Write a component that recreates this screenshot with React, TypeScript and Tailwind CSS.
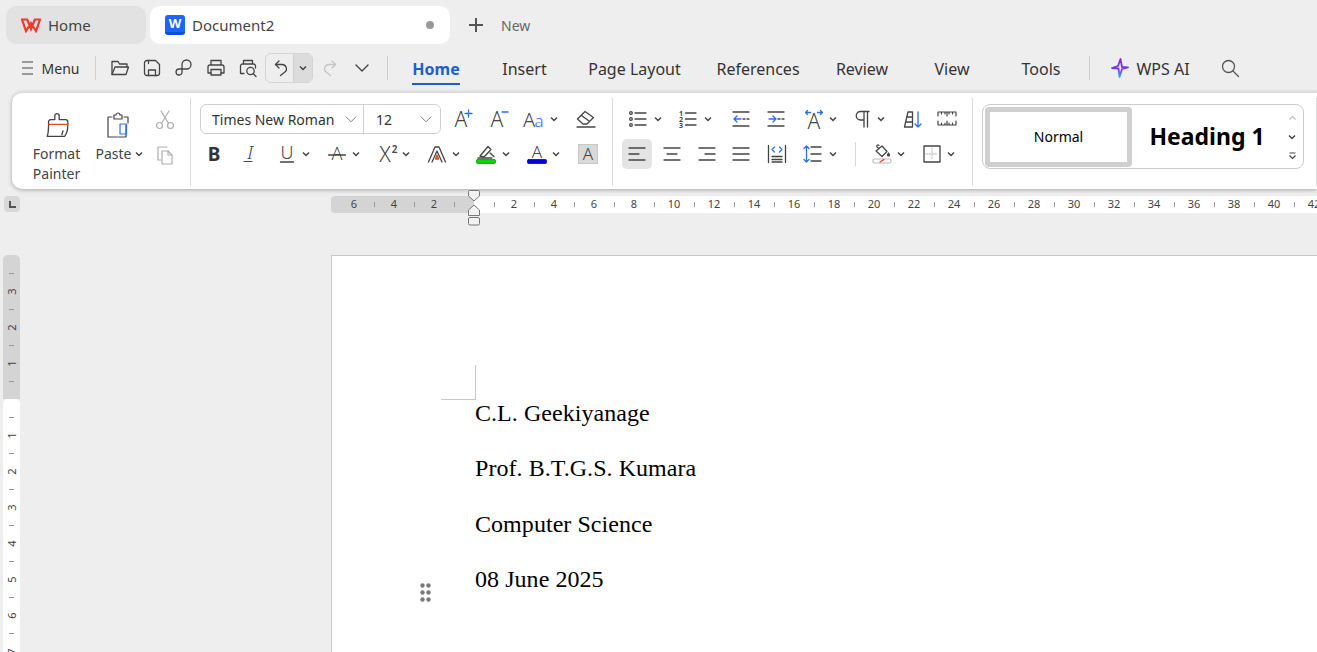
import type { ReactNode } from 'react';

const BLUE = '#2f6fed';
const INK = '#444';
const TXT = { fontFamily: '"Noto Sans", sans-serif' };

function Ic({ children, w = 20, h = 20, box = '0 0 20 20', color = INK, sw = 1.3 }: { children: ReactNode; w?: number; h?: number; box?: string; color?: string; sw?: number }) {
  return (
    <svg width={w} height={h} viewBox={box} fill="none" stroke={color} strokeWidth={sw} strokeLinecap="round" strokeLinejoin="round" className="shrink-0 overflow-visible">
      {children}
    </svg>
  );
}

function Chev() {
  return (
    <svg width="8" height="8" viewBox="0 0 8 8" fill="none" stroke="#444" strokeWidth="1.5" className="shrink-0">
      <path d="M1 2.5 4 5.5 7 2.5" />
    </svg>
  );
}

function Letter({ x = 10, y = 16, size = 21, fill = INK, weight = 300, style = 'normal', children }: { x?: number; y?: number; size?: number; fill?: string; weight?: number; style?: string; children: string }) {
  return (
    <text x={x} y={y} textAnchor="middle" fontSize={size} fontWeight={weight} fontStyle={style} fill={fill} stroke="none" fontFamily='"Noto Sans", sans-serif'>
      {children}
    </text>
  );
}

/* ---------- quick access icons ---------- */
const Open = () => <Ic><path d="M2 16.5V3.5h6L9.5 6H17v3" /><path d="M2 16.5h14L18.5 9H5z" /></Ic>;
const Save = () => <Ic><path d="M5 2.5h8.5L17.5 6.5V15a2.5 2.5 0 0 1-2.5 2.5H5A2.5 2.5 0 0 1 2.5 15V5A2.5 2.5 0 0 1 5 2.5z" /><path d="M6.5 17.5v-5.5h7v5.5M6.5 2.5v3" /></Ic>;
const Loop = () => <Ic><path d="M8 11h4.5a4.5 4.5 0 0 0 0-9A4.5 4.5 0 0 0 8 6.5V14.5a3 3 0 1 1-3-3.5h3" /></Ic>;
const Print = () => <Ic><path d="M5 7V2.5h10V7M5 15H2V9a2 2 0 0 1 2-2h12a2 2 0 0 1 2 2v6h-3" /><rect x="5" y="11.5" width="10" height="5.5" /></Ic>;
const Preview = () => <Ic><path d="M5.5 6V2.5h9V6M6 15.5H2.5V8a2 2 0 0 1 2-2h11a2 2 0 0 1 2 2v2" /><circle cx="12.5" cy="13" r="3.7" /><path d="M15.3 15.8 18 18.5" /></Ic>;
const Undo = () => <Ic><path d="M8 3 4.5 6.5 8 10" /><path d="M4.5 6.5H11a4.3 4.3 0 0 1 2.3 8L9.5 17.5" /></Ic>;
const Redo = () => <Ic color="#c4c4c4"><path d="M12 3l3.5 3.5L12 10" /><path d="M15.5 6.5H9a4.3 4.3 0 0 0-2.3 8l3.8 3" /></Ic>;

/* ---------- clipboard group ---------- */
const Brush = () => (
  <Ic w={26} h={26} box="0 0 24 24" sw={1.2}>
    <path d="M10 7V3.5a2 2 0 0 1 4 0V7h6a2 2 0 0 1 2 2v3c0 5-1 8-3 10.5H3c1-3 1.2-6 1.2-10.5V9a2 2 0 0 1 2-2z" />
    <path d="M4.5 11.5h17" stroke="#d9501e" />
    <path d="M17.5 17.5 16.5 21" />
  </Ic>
);
const Paste = () => (
  <Ic w={26} h={26} box="0 0 26 26" sw={1.2}>
    <path d="M7 5H3v20h9M19 5h4v6" />
    <path d="M9 5V3h2a2 2 0 0 1 4 0h2v4H9z" />
    <path d="M21 13v12h-8" />
    <rect x="15" y="12" width="6.5" height="10" stroke={BLUE} />
  </Ic>
);
const Scissors = () => (
  <Ic color="#adadad" sw={1.2}>
    <circle cx="4.5" cy="15.5" r="3" /><circle cx="15.5" cy="15.5" r="3" />
    <path d="M6.5 13.2 14 1M13.5 13.2 6 1" />
  </Ic>
);
const Copy = () => (
  <Ic color="#adadad" sw={1.2}>
    <path d="M12 2H3v13h3" /><path d="M7 6h6l4 4v9H7z" /><path d="M13 6v4h4" />
  </Ic>
);

/* ---------- font group ---------- */
const Grow = () => <Ic><Letter x={8} y={17.5}>A</Letter><path d="M15.5 1v7M12 4.5h7" stroke={BLUE} /></Ic>;
const Shrink = () => <Ic><Letter x={8} y={17.5}>A</Letter><path d="M13 3h6" stroke={BLUE} /></Ic>;
const Case = () => <Ic><Letter x={6} y={17.5} size={20}>A</Letter><Letter x={16} y={17.5} size={17} fill={BLUE}>a</Letter></Ic>;
const Eraser = () => <Ic><path d="m1.5 10 7.5-7.5 8.5 6-6.5 6.5H7z" /><path d="m5.5 6.5 7.5 5.5" /><path d="M1 18h18" /></Ic>;
const Bold = () => <Ic><Letter size={19} weight={700} y={17} fill="#333">B</Letter></Ic>;
const Italic = () => <Ic sw={1.1}><Letter size={19} style="italic" y={15}>I</Letter><path d="M4 17.5h8" /></Ic>;
const Under = () => <Ic><Letter size={18} y={15}>U</Letter><path d="M3.5 18h13" /></Ic>;
const Strike = () => <Ic><Letter size={18} y={16}>A</Letter><path d="M1.5 11h17" /></Ic>;
const Sup = () => <Ic><Letter x={8} y={18} size={21}>X</Letter><Letter x={17.5} y={9} size={10} weight={600}>2</Letter></Ic>;
const Effect = () => <Ic><path d="M1.5 18 8 3h4l6.5 15M5 18l5-11 5 11" /><path d="M8.5 15h3L10 11z" fill="#d9501e" stroke="#d9501e" /></Ic>;
const Highlight = () => (
  <Ic><path d="M4 12 12 2.5l3 3L8 13z" /><path d="M14 9l4 3.5M2 14h14" /><rect x="0.5" y="15.5" width="19" height="4" rx="1" fill="#00d800" stroke="#00a000" strokeWidth="0.8" /></Ic>
);
const FontColor = () => (
  <Ic><Letter size={17} y={14}>A</Letter><rect x="0.5" y="15.5" width="19" height="4" rx="1" fill="#0000e0" stroke="#0000e0" strokeWidth="0.8" /></Ic>
);
const Shaded = () => <div className="w-[20px] h-[20px] bg-[#d9d9d9] border border-[#c8c8c8] flex items-center justify-center"><Ic w={18} h={18}><Letter size={19} y={17}>A</Letter></Ic></div>;

/* ---------- paragraph group ---------- */
const Bullets = () => <Ic><circle cx="3" cy="4" r="1.3" /><circle cx="3" cy="10" r="1.3" /><circle cx="3" cy="16" r="1.3" /><path d="M7 4h11M7 10h11M7 16h11" /></Ic>;
const Numbers = () => <Ic><Letter x={3} y={6.5} size={7} weight={700}>1</Letter><Letter x={3} y={12.5} size={7} weight={700}>2</Letter><Letter x={3} y={19} size={7} weight={700}>3</Letter><path d="M7.5 4h10.5M7.5 10h10.5M7.5 16h10.5" /></Ic>;
const Outdent = () => <Ic><path d="M2 3h16M2 17h16M12 10h2M16 10h2" /><path d="M10 10H3M6 7l-3 3 3 3" stroke={BLUE} /></Ic>;
const Indent = () => <Ic><path d="M2 3h16M2 17h16M12 10h2M16 10h2" /><path d="M3 10h7M7 7l3 3-3 3" stroke={BLUE} /></Ic>;
const Direction = () => <Ic><Letter y={20} size={21}>A</Letter><path d="M1.5 3.5h5M3.5 1.5l-2 2 2 2M13.5 3.5h5M16.5 1.5l2 2-2 2" stroke={BLUE} /></Ic>;
const Pilcrow = () => <Ic><path d="M12 2.5H8.5a4 4 0 0 0 0 8.5H12M12 2.5V18M15.5 2.5V18M12 2.5h5" /></Ic>;
const Sort = () => <Ic><path d="M1.5 18 5 3h4.5v15zM2.5 13H9.5M3.5 8H9.5" /><path d="M15 3v15M12 15l3 3 3-3" stroke={BLUE} /></Ic>;
const RulerIc = () => <Ic sw={1.2}><path d="M1 3h18M1 16h18M1 3v4M19 3v4M1 16v-4M19 16v-4M4.5 3v2M8 3v2M12 3v2M15.5 3v2M4.5 16v-2M8 16v-2M12 16v-2M15.5 16v-2M10 3v4M10 16v-4" /></Ic>;
const AlignIc = ({ d }: { d: string }) => <Ic><path d={d} /></Ic>;
const Distribute = () => <Ic><path d="M1.5 1.5v17M18.5 1.5v17M5 12.5h10M5 15.5h10M5 18h10" /><path d="M7.5 3 5 5.5 7.5 8M12.5 3 15 5.5 12.5 8" stroke={BLUE} /></Ic>;
const Spacing = () => <Ic><path d="M8 3h10M8 10h10M8 17h10" /><path d="M3.5 2v16M1 4.5l2.5-2.5L6 4.5M1 15.5 3.5 18 6 15.5" stroke={BLUE} /></Ic>;
const Bucket = () => (
  <Ic sw={1.2}>
    <path d="m4 7 6-5 5 5.5-5 5z" /><path d="M7 4.5 5 3a1.2 1.2 0 0 1 2-1.5" /><path d="M16.5 9c.8 1 1 1.5 1 2a1 1 0 0 1-2 0c0-.5.2-1 1-2z" fill="#444" />
    <rect x="1" y="15" width="18" height="4" rx="1.5" stroke="#bbb" /><path d="m8 18 4-2.5" stroke="#e0342c" />
  </Ic>
);
const Borders = () => <Ic sw={1.3}><rect x="2" y="2" width="16" height="16" /><path d="M10 4v12M4 10h12" stroke="#ccc" strokeDasharray="1.5 1.5" /></Ic>;

function Dd({ children, gap = 'gap-[5px]' }: { children: ReactNode; gap?: string }) {
  return <div className={`flex items-center ${gap}`}>{children}<Chev /></div>;
}

function Sep() {
  return <div className="w-px h-[88px] bg-[#dcdcdc] shrink-0 mt-[5px]" />;
}

function VSep() {
  return <div className="w-px h-[24px] bg-[#cfcfcf] shrink-0" />;
}

/* ---------- rulers ---------- */
function HSlot({ n }: { n?: number }) {
  return (
    <div className="w-[20px] shrink-0 flex items-center justify-center text-[11px] text-[#444]">
      {n !== undefined ? n : <div className="w-px h-[5px] bg-[#999]" />}
    </div>
  );
}

function VSlot({ n }: { n?: number }) {
  return (
    <div className="h-[18px] shrink-0 flex items-center justify-center text-[11px] text-[#444]">
      {n !== undefined ? <span className="-rotate-90 leading-none">{n}</span> : <div className="h-px w-[5px] bg-[#999]" />}
    </div>
  );
}

const RIGHT_NUMS = [2, 4, 6, 8, 10, 12, 14, 16, 18, 20, 22, 24, 26, 28, 30, 32, 34, 36, 38, 40, 42];
const DOWN_NUMS = [1, 2, 3, 4, 5, 6, 7];

const TABS = [
  { label: 'Insert', cls: 'ml-[43px] w-[43px]' },
  { label: 'Page Layout', cls: 'ml-[42px] w-[93px]' },
  { label: 'References', cls: 'ml-[36px] w-[82px]' },
  { label: 'Review', cls: 'ml-[37px] w-[52px]' },
  { label: 'View', cls: 'ml-[46px] w-[36px]' },
  { label: 'Tools', cls: 'ml-[52px] w-[38px]' },
];

export default function App() {
  return (
    <div className="h-[652px] w-[1317px] overflow-hidden bg-[#eeeeee] text-[#333]" style={TXT}>
      {/* Title tabs */}
      <div className="flex items-center h-[44px] pt-[6px] pl-[6px]">
        <div className="w-[140px] h-[38px] rounded-[10px] bg-[#e2e2e2] flex items-center pl-[15px]">
          <svg width="20" height="16" viewBox="0 0 20 16" fill="none" stroke="#f0392b" strokeWidth="2.2" strokeLinejoin="miter" className="shrink-0">
            <path d="M1 2.5h5.2l3.8 9.5 3.8-9.5H19L15 14l-5-8-5 8z" />
          </svg>
          <span className="ml-[7px] text-[15px] text-[#444]">Home</span>
        </div>
        <div className="ml-[4px] w-[300px] h-[38px] rounded-[10px] bg-white flex items-center pl-[15px]">
          <div className="w-[20px] h-[20px] rounded-[3px] bg-[#1a66ff] flex items-center justify-center text-white text-[13px] font-bold leading-none border-b-[3px] border-[#0d4fd6]">W</div>
          <span className="ml-[7px] text-[15px] text-[#444] w-[234px]">Document2</span>
          <div className="w-[8px] h-[8px] rounded-full bg-[#999]" />
        </div>
        <svg width="16" height="16" viewBox="0 0 16 16" stroke="#555" strokeWidth="2" className="ml-[18px] shrink-0"><path d="M8 1v14M1 8h14" /></svg>
        <span className="ml-[17px] text-[14px] text-[#666]">New</span>
      </div>

      {/* Quick access + menu tabs */}
      <div className="flex items-center h-[48px] pl-[22px] text-[16px]">
        <svg width="11" height="16" viewBox="0 0 11 16" stroke="#444" strokeWidth="1.2" className="shrink-0"><path d="M0 2h11M0 8h11M0 14h11" /></svg>
        <span className="ml-[9px] w-[37px] text-[14px] whitespace-nowrap flex justify-center">Menu</span>
        <div className="ml-[16px]"><VSep /></div>
        <div className="ml-[14px] flex items-center gap-[12px]">
          <Open /><Save /><Loop /><Print /><Preview />
        </div>
        <div className="ml-[7px] w-[48px] h-[30px] rounded-[6px] border border-[#d4d4d4] flex overflow-hidden shrink-0">
          <div className="w-[27px] flex items-center justify-center pl-[3px]"><Undo /></div>
          <div className="flex-1 bg-[#dcdcdc] border-l border-[#d0d0d0] flex items-center justify-center"><Chev /></div>
        </div>
        <div className="ml-[7px]"><Redo /></div>
        <div className="ml-[12px]">
          <Ic sw={1.4}><path d="m4 7 6 6 6-6" /></Ic>
        </div>
        <div className="ml-[15px]"><VSep /></div>
        <div className="ml-[24px] w-[48px] self-start mt-[13px] flex flex-col items-center">
          <span className="leading-[24px] font-bold text-[#1b5fcf] whitespace-nowrap">Home</span>
          <div className="h-[2px] w-full bg-[#1b5fcf] mt-[2px]" />
        </div>
        {TABS.map((t) => (
          <span key={t.label} className={`${t.cls} mt-[2px] flex justify-center whitespace-nowrap`}>{t.label}</span>
        ))}
        <div className="ml-[29px]"><VSep /></div>
        <svg width="18" height="20" viewBox="0 0 18 20" fill="none" strokeWidth="1.8" strokeLinejoin="round" className="ml-[21px] shrink-0">
          <defs>
            <linearGradient id="wpsai" x1="0" y1="0" x2="0" y2="1">
              <stop offset="0" stopColor="#8a2be2" />
              <stop offset="0.6" stopColor="#6a3cf0" />
              <stop offset="1" stopColor="#35a8f0" />
            </linearGradient>
          </defs>
          <path d="M9.5 1 7 8 1 10l6.5.5L8.5 19 11 11l6-1.5-6-.5z" stroke="url(#wpsai)" />
        </svg>
        <span className="ml-[6px] w-[56px] mt-[2px] flex justify-center whitespace-nowrap">WPS AI</span>
        <div className="ml-[29px]">
          <Ic color="#555" sw={1.3}><circle cx="8.5" cy="8.5" r="6" /><path d="m13 13 5.5 5.5" /></Ic>
        </div>
      </div>

      {/* Ribbon */}
      <div className="ml-[12px] h-[97px] bg-white rounded-l-[10px] border-t border-[#dcdcdc] shadow-[0_1px_4px_rgba(0,0,0,0.3)] flex items-start">
        <div className="w-[178px] h-full flex shrink-0 pl-[21px] pt-[19px]">
          <div className="w-[47px] flex flex-col items-center text-[14px] leading-[20px] text-[#444] whitespace-nowrap">
            <div className="mb-[6px] h-[26px]"><Brush /></div>
            <span>Format</span>
            <span>Painter</span>
          </div>
          <div className="ml-[17px] w-[44px] flex flex-col items-center text-[14px] leading-[20px] text-[#444]">
            <div className="mb-[6px] h-[26px] -ml-[2px]"><Paste /></div>
            <div className="flex items-center gap-[3px]"><span>Paste</span><Chev /></div>
          </div>
          <div className="ml-[14px] -mt-[7px] flex flex-col">
            <div className="h-[30px] flex items-center"><Scissors /></div>
            <div className="h-[30px] mt-[5px] flex items-center"><Copy /></div>
          </div>
        </div>
        <Sep />

        {/* Font */}
        <div className="w-[421px] shrink-0 pl-[9px] pt-[11px] flex flex-col gap-[5px]">
          <div className="h-[30px] flex items-center">
            <div className="w-[241px] h-[30px] rounded-[6px] border border-[#d0d0d0] flex items-center text-[14px] text-[#333] shrink-0">
              <div className="w-[163px] h-full border-r border-[#d0d0d0] flex items-center justify-between pl-[11px] pr-[5px]">
                <span className="whitespace-nowrap">Times New Roman</span>
                <Ic w={14} h={14} color="#777"><path d="m3 7 7 7 7-7" /></Ic>
              </div>
              <div className="flex-1 h-full flex items-center justify-between pl-[12px] pr-[7px]">
                <span>12</span>
                <Ic w={14} h={14} color="#777"><path d="m3 7 7 7 7-7" /></Ic>
              </div>
            </div>
            <div className="ml-[12px]"><Grow /></div>
            <div className="ml-[16px]"><Shrink /></div>
            <div className="ml-[14px]"><Dd gap="gap-[7px]"><Case /></Dd></div>
            <div className="ml-[18px]"><Eraser /></div>
          </div>
          <div className="h-[30px] flex items-center gap-[17px] pl-[4px]">
            <Bold />
            <div className="-ml-[1px]"><Italic /></div>
            <Dd><Under /></Dd>
            <Dd><Strike /></Dd>
            <Dd><Sup /></Dd>
            <Dd><Effect /></Dd>
            <div className="-ml-[1px]"><Dd gap="gap-[6px]"><Highlight /></Dd></div>
            <Dd><FontColor /></Dd>
            <div className="ml-[1px]"><Shaded /></div>
          </div>
        </div>
        <Sep />

        {/* Paragraph */}
        <div className="w-[359px] shrink-0 pl-[9px] pt-[11px] flex flex-col gap-[5px]">
          <div className="h-[30px] flex items-center pl-[6px]">
            <Dd gap="gap-[6px]"><Bullets /></Dd>
            <div className="ml-[16px]"><Dd gap="gap-[6px]"><Numbers /></Dd></div>
            <div className="ml-[19px]"><Outdent /></div>
            <div className="ml-[15px]"><Indent /></div>
            <div className="ml-[18px]"><Dd><Direction /></Dd></div>
            <div className="ml-[15px]"><Dd><Pilcrow /></Dd></div>
            <div className="ml-[18px]"><Sort /></div>
            <div className="ml-[14px]"><RulerIc /></div>
          </div>
          <div className="h-[30px] flex items-center">
            <div className="w-[30px] h-[30px] rounded-[5px] bg-[#e4e4e4] flex items-center justify-center">
              <AlignIc d="M2 4h16M2 10h10M2 16h16" />
            </div>
            <div className="ml-[10px]"><AlignIc d="M2 4h16M5 10h10M2 16h16" /></div>
            <div className="ml-[15px]"><AlignIc d="M2 4h16M8 10h10M2 16h16" /></div>
            <div className="ml-[14px]"><AlignIc d="M2 4h16M2 10h16M2 16h16" /></div>
            <div className="ml-[16px]"><Distribute /></div>
            <div className="ml-[16px]"><Dd gap="gap-[6px]"><Spacing /></Dd></div>
            <div className="ml-[18px] w-px h-[24px] bg-[#d8d8d8]" />
            <div className="ml-[16px]"><Dd><Bucket /></Dd></div>
            <div className="ml-[17px]"><Dd><Borders /></Dd></div>
          </div>
        </div>
        <Sep />

        {/* Styles gallery */}
        <div className="ml-[9px] mt-[11px] w-[322px] h-[65px] rounded-[8px] border border-[#cccccc] flex items-center pl-[2px] shrink-0">
          <div className="w-[147px] h-[60px] rounded-[4px] border-[5px] border-[#cfcfcf] flex items-center justify-center text-[14px] text-black shrink-0">Normal</div>
          <div className="w-[150px] flex justify-center text-[23px] font-bold text-black whitespace-nowrap">Heading 1</div>
          <div className="w-[20px] flex flex-col items-center gap-[11px]">
            <svg width="9" height="8" viewBox="0 0 8 8" fill="none" stroke="#c4c4c4" strokeWidth="1.4"><path d="M1 5.5 4 2.5 7 5.5" /></svg>
            <Chev />
            <svg width="9" height="8" viewBox="0 0 8 8" fill="none" stroke="#444" strokeWidth="1.2"><path d="M1 1h6M1 3.5 4 6.5 7 3.5" /></svg>
          </div>
        </div>
        <div className="ml-[12px]"><Sep /></div>
      </div>

      {/* Horizontal ruler */}
      <div className="mt-[7px] h-[17px] flex pl-[4px]">
        <div className="w-[16px] h-[16px] rounded-[4px] bg-[#d8d8d8] flex items-center justify-center shrink-0">
          <div className="w-[7px] h-[7px] border-l-2 border-b-2 border-[#555]" />
        </div>
        <div className="relative ml-[311px] flex-1 flex min-w-0">
          <div className="w-[143px] shrink-0 bg-[#d4d4d4] rounded-l-[4px] flex items-center pl-[13px]">
            {[6, 4, 2].map((n) => (
              <div key={n} className="flex">
                <HSlot n={n} />
                <HSlot />
              </div>
            ))}
          </div>
          <div className="flex-1 bg-white flex items-center pl-[10px] overflow-hidden min-w-0">
            {RIGHT_NUMS.map((n) => (
              <div key={n} className="flex shrink-0">
                <HSlot />
                <HSlot n={n} />
              </div>
            ))}
          </div>
          {/* indent markers */}
          <svg width="14" height="36" viewBox="0 0 14 36" fill="#f2f2f2" stroke="#777" strokeWidth="1" className="absolute left-[136px] -top-[6px]">
            <path d="M1.5 1.5a1 1 0 0 1 1-1h9a1 1 0 0 1 1 1V6L7 11 1.5 6z" />
            <path d="M7 15l5.5 5v5.5h-11V20z" />
            <rect x="1.5" y="27.5" width="11" height="7.5" rx="1.5" />
          </svg>
        </div>
      </div>

      {/* Body */}
      <div className="mt-[42px] h-[397px] flex pl-[3px]">
        <div className="w-[17px] shrink-0 flex flex-col overflow-hidden">
          <div className="h-[144px] shrink-0 bg-[#d4d4d4] rounded-t-[5px] pt-[9px]">
            {[3, 2, 1].map((n) => (
              <div key={n}>
                <VSlot />
                <VSlot n={n} />
              </div>
            ))}
            <VSlot />
          </div>
          <div className="flex-1 bg-white rounded-t-[5px] pt-[9px]">
            {DOWN_NUMS.map((n) => (
              <div key={n}>
                <VSlot />
                <VSlot n={n} />
              </div>
            ))}
          </div>
        </div>
        <div className="relative ml-[311px] flex-1 bg-white border-t border-l border-[#c8c8c8] pt-[109px] min-w-0">
          <div className="ml-[109px] w-[35px] h-[35px] border-r border-b border-[#c8c8c8]" />
          <div className="ml-[143px] -mt-[0.3px] flex flex-col gap-[28.5px] text-[24px] leading-[27px] tracking-[0.05px] text-black" style={{ fontFamily: '"Liberation Serif", serif' }}>
            <p>C.L. Geekiyanage</p>
            <p>Prof. B.T.G.S. Kumara</p>
            <p>Computer Science</p>
            <p>08 June 2025</p>
          </div>
          <svg width="11" height="19" viewBox="0 0 11 19" fill="#7a7a7a" className="absolute left-[88px] top-[327px]">
            <circle cx="2.5" cy="2.5" r="2.2" /><circle cx="8.5" cy="2.5" r="2.2" />
            <circle cx="2.5" cy="9.5" r="2.2" /><circle cx="8.5" cy="9.5" r="2.2" />
            <circle cx="2.5" cy="16.5" r="2.2" /><circle cx="8.5" cy="16.5" r="2.2" />
          </svg>
        </div>
      </div>
    </div>
  );
}
